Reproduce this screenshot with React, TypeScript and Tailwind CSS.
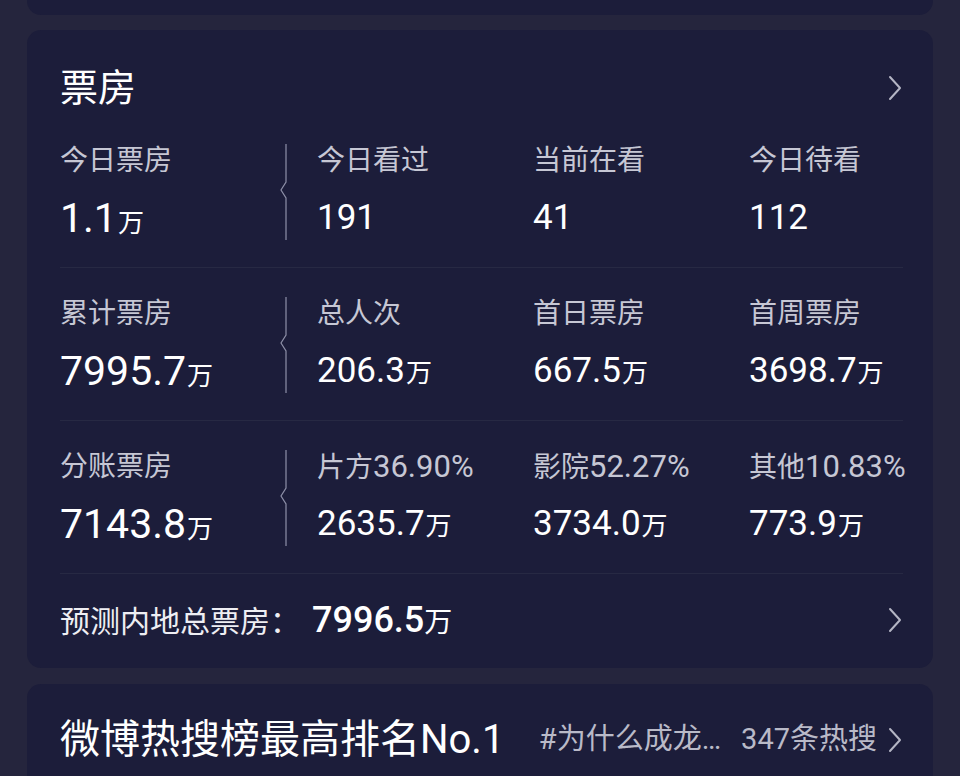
import React from "react";

const FONT = { fontFamily: 'Roboto, "Noto Sans CJK SC", sans-serif' };

interface Stat {
  label: string;
  pct?: string;
  value: string;
  unit?: string;
}

const rows: Stat[][] = [
  [
    { label: "今日票房", value: "1.1", unit: "万" },
    { label: "今日看过", value: "191" },
    { label: "当前在看", value: "41" },
    { label: "今日待看", value: "112" },
  ],
  [
    { label: "累计票房", value: "7995.7", unit: "万" },
    { label: "总人次", value: "206.3", unit: "万" },
    { label: "首日票房", value: "667.5", unit: "万" },
    { label: "首周票房", value: "3698.7", unit: "万" },
  ],
  [
    { label: "分账票房", value: "7143.8", unit: "万" },
    { label: "片方", pct: "36.90%", value: "2635.7", unit: "万" },
    { label: "影院", pct: "52.27%", value: "3734.0", unit: "万" },
    { label: "其他", pct: "10.83%", value: "773.9", unit: "万" },
  ],
];

function Chevron() {
  return (
    <svg width="16" height="26" viewBox="0 0 16 26" fill="none" className="shrink-0">
      <polyline
        points="3,2 13,13 3,24"
        stroke="#b4b5c4"
        strokeWidth="2"
        strokeLinecap="round"
        strokeLinejoin="round"
      />
    </svg>
  );
}

function KinkDivider() {
  return (
    <svg width="12" height="96" viewBox="0 0 12 96" fill="none" className="shrink-0">
      <polyline points="8,0 8,38 3,46 8,54 8,96" stroke="#8e90a8" strokeWidth="1.2" fill="none" />
    </svg>
  );
}

function StatCell({ stat, primary }: { stat: Stat; primary?: boolean }) {
  return (
    <div className="flex flex-col">
      <div className="flex h-[36px] items-baseline text-[28px] leading-[36px] text-[#c6c7d4] whitespace-nowrap">
        <span>{stat.label}</span>
        {stat.pct && <span className="text-[31px]">{stat.pct}</span>}
      </div>
      <div className="mt-[17px] flex h-[44px] items-baseline leading-[44px] text-white whitespace-nowrap">
        <span className={primary ? "text-[41px]" : "text-[35px]"}>{stat.value}</span>
        {stat.unit && <span className="text-[26px] ml-[1px]">{stat.unit}</span>}
      </div>
    </div>
  );
}

export default function App() {
  return (
    <div className="w-[960px] h-[776px] overflow-hidden bg-[#25253d] px-[27px]" style={FONT}>
      <div className="h-[15px] rounded-b-[14px] bg-[#1c1d3a]" />

      <div className="mt-[15px] h-[638px] rounded-[14px] bg-[#1c1d3a] pl-[33px] pr-[30px] pt-[36px]">
        <div className="flex h-[44px] items-center justify-between">
          <span className="text-[38px] leading-[44px] text-white">票房</span>
          <Chevron />
        </div>

        <div className="mt-[33px]">
          {rows.map((row, ri) => (
            <div
              key={ri}
              className={`grid grid-cols-[257px_216px_216px_1fr] pb-[27px] ${
                ri > 0 ? "border-t border-[#272943] pt-[28px]" : ""
              }`}
            >
              {row.map((stat, ci) => (
                <div key={ci} className="flex">
                  <StatCell stat={stat} primary={ci === 0} />
                  {ci === 0 && (
                    <div className="ml-auto mr-[27px] flex items-center">
                      <KinkDivider />
                    </div>
                  )}
                </div>
              ))}
            </div>
          ))}
          <div className="flex h-[93px] items-center justify-between border-t border-[#272943]">
            <div className="flex h-[44px] items-baseline leading-[44px] text-white whitespace-nowrap">
              <span className="text-[30px] text-[#eeeef3]">预测内地总票房：</span>
              <span className="ml-[12px] text-[36px] font-medium">7996.5</span>
              <span className="text-[28px]">万</span>
            </div>
            <Chevron />
          </div>
        </div>
      </div>

      <div className="mt-[16px] h-[200px] rounded-[14px] bg-[#1c1d3a] pl-[33px] pr-[30px] pt-[32px]">
        <div className="flex h-[48px] items-center">
          <span className="text-[40px] leading-[48px] text-white whitespace-nowrap">微博热搜榜最高排名No.1</span>
          <span className="ml-auto text-[29px] text-[#b9bac8] whitespace-nowrap">#为什么成龙…</span>
          <span className="ml-[20px] text-[29px] text-[#b9bac8] whitespace-nowrap">347条热搜</span>
          <span className="ml-[10px] flex">
            <Chevron />
          </span>
        </div>
      </div>
    </div>
  );
}
